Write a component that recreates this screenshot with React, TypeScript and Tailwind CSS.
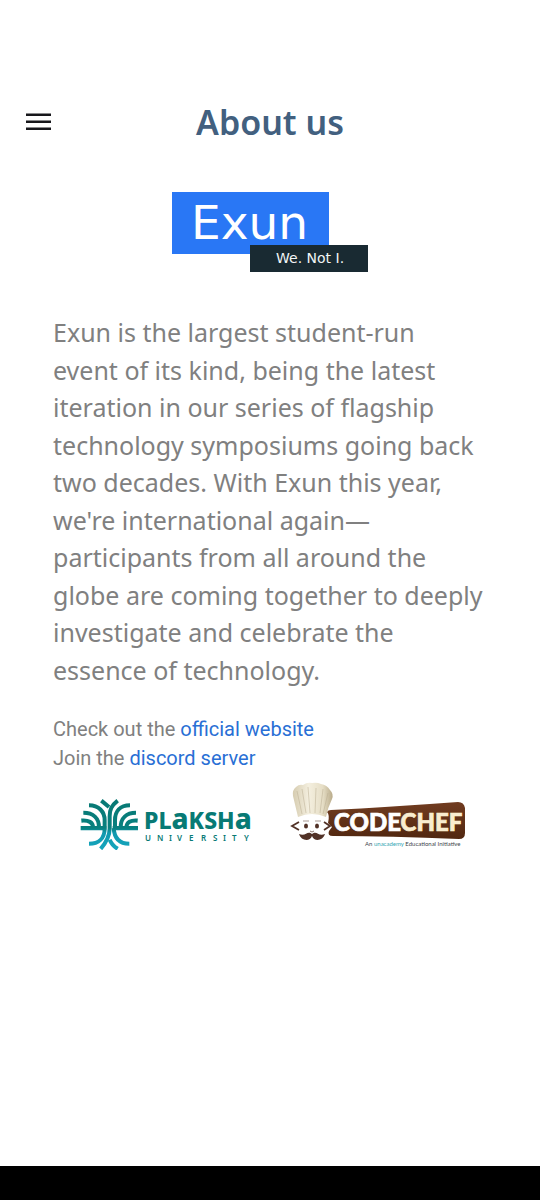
function ExunLogo() {
  return (
    <svg className="mx-auto block" width="196" height="80" viewBox="0 0 196 80" role="img" aria-label="Exun">
      <rect width="157" height="62" fill="#2977f5" />
      <rect x="78" y="53" width="118" height="27" fill="#192a32" />
      <text x="19" y="47" fontFamily="DejaVu Sans, sans-serif" fontSize="47" fill="#fff">Exun</text>
      <text x="104" y="71" fontFamily="DejaVu Sans, sans-serif" fontSize="14" fill="#f1f5f6">We. Not I.</text>
    </svg>
  );
}

function PlakshaLogo() {
  return (
    <svg width="172" height="54" viewBox="0 0 172 54" role="img" aria-label="Plaksha University">
      <defs>
        <linearGradient id="leaf" x1="0" y1="30" x2="0" y2="176" gradientUnits="userSpaceOnUse">
          <stop offset="0" stopColor="#087873" />
          <stop offset="0.58" stopColor="#08807f" />
          <stop offset="0.68" stopColor="#1299ae" />
          <stop offset="1" stopColor="#14a5bd" />
        </linearGradient>
      </defs>
      <g transform="translate(-10 -7) scale(0.3333 0.34)" fill="none" stroke="url(#leaf)" strokeWidth="12">
        <path d="M57 48C86 48 104 66 104 92V116C104 145 86 161 57 161" />
        <path d="M180 48C150 48 135 66 135 92V116" />
        <path d="M40 70C70 70 87 86 87 113" />
        <path d="M198 70C169 70 152 86 152 113" />
        <path d="M34 93C56 91 69 98 69 113" />
        <path d="M203 93C182 91 170 98 169 113" />
        <path d="M32 115H109M128 115H204" />
        <path d="M94 34L117 53M143 34C124 49 119 61 119 80V116C119 138 111 154 92 176" />
        <path d="M131 115C133 145 149 161 178 161" />
        <path d="M119 149C124 161 132 169 143 176" />
      </g>
      <g fill="#087a75" fontFamily="Noto Sans, sans-serif">
        <text x="64" y="33" fontSize="23" fontWeight="800">
          PL<tspan fontSize="28">a</tspan>KSH<tspan fontSize="28">a</tspan>
        </text>
        <text x="65 77 89 97 109 121 133 143 152 164" y="45" fontSize="8" fontWeight="600">UNIVERSITY</text>
      </g>
    </svg>
  );
}

function CodeChefLogo() {
  return (
    <svg width="176" height="68" viewBox="0 0 176 68" role="img" aria-label="CodeChef">
      <defs>
        <linearGradient id="board" x1="0" y1="0" x2="0" y2="1">
          <stop offset="0" stopColor="#713c20" />
          <stop offset="1" stopColor="#512710" />
        </linearGradient>
        <linearGradient id="hat" x1="0" y1="0" x2="1" y2="0">
          <stop offset="0" stopColor="#d6ccb0" />
          <stop offset="0.4" stopColor="#f4efdf" />
          <stop offset="0.75" stopColor="#e6dec6" />
          <stop offset="1" stopColor="#b9ab8a" />
        </linearGradient>
      </defs>
      <path d="M41 28Q100 25 168 20Q174 20 175 26V51Q175 57 169 57Q100 54 43 54Q37 54 39 49L42 45L38 41Q40 33 37 30Q38 28 41 28Z" fill="url(#board)" />
      <path d="M8 35L3 14Q2 8 6 5Q9 2 13 3Q17 0 22 1Q27 0 31 2Q37 3 40 8Q44 12 42 17Q38 25 36 35Q22 29 8 35Z" fill="url(#hat)" />
      <path d="M7 9L12 32M12 7L16 31M18 5L20 31M26 6L25 31M33 7L30 31M38 11L33 32" fill="none" stroke="#b9ad90" strokeWidth="0.5" />
      <path d="M8 36Q22 30 37 36V47Q34 57 23 57Q11 57 9 49Z" fill="#fff" />
      <g fill="none" stroke="#513126" strokeWidth="1.8">
        <path d="M9 40L2 44L9 48M34 40L40 44L34 48" />
        <path d="M13 39H19M25 39H31" strokeWidth="0.5" />
      </g>
      <ellipse cx="16" cy="44" rx="2" ry="2.6" fill="#513126" />
      <ellipse cx="27" cy="44" rx="2" ry="2.6" fill="#513126" />
      <path d="M22 52C17 48 16 55 9 52C11 59 20 60 22 54C24 60 33 59 35 52C28 55 27 48 22 52Z" fill="#513126" />
      <path d="M20 49Q22 51 24 49" fill="none" stroke="#8b7770" />
      <text x="44" y="49" fontFamily="Lato, sans-serif" fontWeight="900" fontSize="24" fill="#fff" stroke="#fff" strokeWidth="0.7">
        CODE<tspan fill="#f9edcf" stroke="#f9edcf">CHEF</tspan>
      </text>
      <text x="75" y="64" fontFamily="Lato, sans-serif" fontSize="6" fill="#3e454c">
        An <tspan fill="#35a6b4">unacademy</tspan> Educational Initiative
      </text>
    </svg>
  );
}

export default function App() {
  return (
    <div className="flex min-h-screen flex-col bg-white">
      <header className="grid grid-cols-[26px_1fr_26px] items-center px-[25px] pt-[97px]">
        <button type="button" aria-label="Open menu" className="flex h-12 items-center">
          <svg width="26" height="18" viewBox="0 0 26 18" fill="#17171b">
            <path d="M1 0.5h25v2.5H1zM1 7.5h25v2.5H1zM1 14.5h25v2.5H1z" />
          </svg>
        </button>
        <h1 className="text-center font-['Noto_Sans'] text-[34px] leading-[50px] font-semibold text-[#42607f]">About us</h1>
      </header>

      <main className="flex-1 px-[53px] pt-[45px]">
        <ExunLogo />
        <p className="mt-[42px] font-['Noto_Sans'] text-[25px] leading-normal whitespace-nowrap text-[#808080]">
          Exun is the largest student-run<br />
          event of its kind, being the latest<br />
          iteration in our series of flagship<br />
          technology symposiums going back<br />
          two decades. With Exun this year,<br />
          we're international again—<br />
          participants from all around the<br />
          globe are coming together to deeply<br />
          investigate and celebrate the<br />
          essence of technology.
        </p>
        <div className="mt-[26px] font-[Roboto] text-[20px] leading-[29px] text-[#808080]">
          <p>Check out the <a href="#website" className="text-[#296fd5]">official website</a></p>
          <p>Join the <a href="#discord" className="text-[#296fd5]">discord server</a></p>
        </div>
        <div className="mt-[9px] flex items-end justify-between pr-[21px] pl-[27px]">
          <PlakshaLogo />
          <CodeChefLogo />
        </div>
      </main>

      <footer className="h-[34px] bg-black" />
    </div>
  );
}
